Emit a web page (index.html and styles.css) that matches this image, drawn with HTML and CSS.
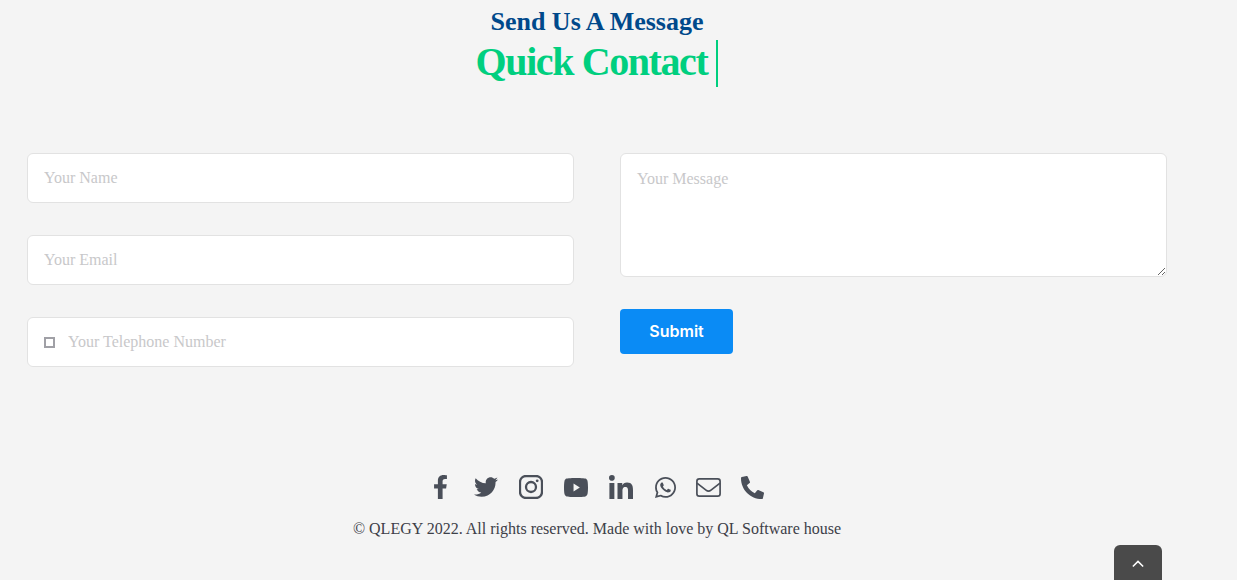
FILE: index.html
```html
<!DOCTYPE html>
<html lang="en">
<head>
  <meta charset="UTF-8">
  <meta name="viewport" content="width=device-width, initial-scale=1.0">
  <title>Quick Contact</title>
  <link rel="stylesheet" href="styles.css">
</head>
<body>
  <div class="page">
    <div class="heading">
      <h3>Send Us A Message</h3>
      <h2><span class="typed">Quick Contact</span></h2>
    </div>

    <form class="contact-form">
      <div class="col">
        <div class="field"><input type="text" placeholder="Your Name"></div>
        <div class="field"><input type="email" placeholder="Your Email"></div>
        <div class="field"><span class="flag-box"></span><input type="tel" placeholder="Your Telephone Number"></div>
      </div>
      <div class="col">
        <textarea placeholder="Your Message"></textarea>
        <button type="button" class="submit">Submit</button>
      </div>
    </form>

    <div class="footer">
      <div class="social">
        <a href="#" aria-label="Facebook"><svg class="i-fb" viewBox="0 0 320 512"><path d="M279.14 288l14.22-92.66h-88.91v-60.13c0-25.35 12.42-50.06 52.24-50.06h40.42V6.26S260.43 0 225.36 0c-73.22 0-121.08 44.38-121.08 124.72v70.62H22.89V288h81.39v224h100.17V288z"/></svg></a>
        <a href="#" aria-label="Twitter"><svg class="i-tw" viewBox="0 0 512 512"><path d="M459.37 151.716c.325 4.548.325 9.097.325 13.645 0 138.72-105.583 298.558-298.558 298.558-59.452 0-114.68-17.219-161.137-47.106 8.447.974 16.568 1.299 25.34 1.299 49.055 0 94.213-16.568 130.274-44.832-46.132-.975-84.792-31.188-98.112-72.772 6.498.974 12.995 1.624 19.818 1.624 9.421 0 18.843-1.3 27.614-3.573-48.081-9.747-84.143-51.98-84.143-102.985v-1.299c13.969 7.797 30.214 12.67 47.431 13.319-28.264-18.843-46.781-51.005-46.781-87.391 0-19.492 5.197-37.36 14.294-52.954 51.655 63.675 129.3 105.258 216.365 109.807-1.624-7.797-2.599-15.918-2.599-24.04 0-57.828 46.782-104.934 104.934-104.934 30.213 0 57.502 12.67 76.67 33.137 23.715-4.548 46.456-13.32 66.599-25.34-7.798 24.366-24.366 44.833-46.132 57.827 21.117-2.273 41.584-8.122 60.426-16.243-14.292 20.791-32.161 39.308-52.628 54.253z"/></svg></a>
        <a href="#" aria-label="Instagram"><svg class="i-ig" viewBox="0 0 24 24"><rect x="1" y="1" width="22" height="22" rx="6" class="line"/><circle cx="12" cy="12" r="5" class="line"/><circle cx="18.2" cy="5.8" r="1.4"/></svg></a>
        <a href="#" aria-label="YouTube"><svg class="i-yt" viewBox="15 64 546 384" preserveAspectRatio="none"><path d="M549.655 124.083c-6.281-23.65-24.787-42.276-48.284-48.597C458.781 64 288 64 288 64S117.22 64 74.629 75.486c-23.497 6.322-42.003 24.947-48.284 48.597-11.412 42.867-11.412 132.305-11.412 132.305s0 89.438 11.412 132.305c6.281 23.65 24.787 41.5 48.284 47.821C117.22 448 288 448 288 448s170.78 0 213.371-11.486c23.497-6.321 42.003-24.171 48.284-47.821 11.412-42.867 11.412-132.305 11.412-132.305s0-89.438-11.412-132.305zm-317.51 213.508V175.185l142.739 81.205-142.739 81.201z"/></svg></a>
        <a href="#" aria-label="LinkedIn"><svg class="i-in" viewBox="0 0 448 448"><path d="M100.28 448H7.4V148.9h92.88zM53.79 108.1C24.09 108.1 0 83.5 0 53.8a53.79 53.79 0 0 1 107.58 0c0 29.7-24.1 54.3-53.79 54.3zM447.9 448h-92.68V302.4c0-34.7-.7-79.2-48.29-79.2-48.29 0-55.69 37.7-55.69 76.7V448h-92.78V148.9h89.08v40.8h1.3c12.4-23.5 42.69-48.3 87.88-48.3 94 0 111.28 61.9 111.28 142.3V448z"/></svg></a>
        <a href="#" aria-label="WhatsApp"><svg class="i-wa" viewBox="0 32 448 448"><path d="M380.9 97.1C339 55.1 283.2 32 223.9 32c-122.4 0-222 99.6-222 222 0 39.1 10.2 77.3 29.6 111L0 480l117.7-30.9c32.4 17.7 68.9 27 106.1 27h.1c122.3 0 224.1-99.6 224.1-222 0-59.3-25.2-115-67.1-157zm-157 341.6c-33.2 0-65.7-8.9-94-25.7l-6.7-4-69.8 18.3L72 359.2l-4.4-7c-18.5-29.4-28.2-63.3-28.2-98.2 0-101.7 82.8-184.5 184.6-184.5 49.3 0 95.6 19.2 130.4 54.1 34.8 34.9 56.2 81.2 56.1 130.5 0 101.8-84.9 184.6-186.6 184.6zm101.2-138.2c-5.5-2.8-32.8-16.2-37.9-18-5.1-1.9-8.8-2.8-12.5 2.8-3.7 5.6-14.3 18-17.6 21.8-3.2 3.7-6.5 4.2-12 1.4-32.6-16.3-54-29.1-75.5-66-5.7-9.8 5.7-9.1 16.3-30.3 1.8-3.7.9-6.9-.5-9.7-1.4-2.8-12.5-30.1-17.1-41.2-4.5-10.8-9.1-9.3-12.5-9.5-3.2-.2-6.9-.2-10.6-.2-3.7 0-9.7 1.4-14.8 6.9-5.1 5.6-19.4 19-19.4 46.3 0 27.3 19.9 53.7 22.6 57.4 2.8 3.7 39.1 59.7 94.8 83.8 35.2 15.2 49 16.5 66.6 13.9 10.7-1.6 32.8-13.4 37.4-26.4 4.6-13 4.6-24.1 3.2-26.4-1.3-2.5-5-3.9-10.5-6.6z"/></svg></a>
        <a href="#" aria-label="Email"><svg class="i-mail" viewBox="0 0 25 19"><rect x="0.9" y="0.9" width="23.2" height="17.2" rx="2.4" class="line thin"/><path d="M1 5.2l9 7c1.5 1.2 3.5 1.2 5 0l9-7" class="line thin"/></svg></a>
        <a href="#" aria-label="Phone"><svg class="i-ph" viewBox="0 0 512 512"><path d="M497.39 361.8l-112-48a24 24 0 0 0-28 6.9l-49.6 60.6A370.66 370.66 0 0 1 130.6 204.11l60.6-49.6a23.94 23.94 0 0 0 6.9-28l-48-112A24.16 24.16 0 0 0 122.6.61l-104 24A24 24 0 0 0 0 48c0 256.5 207.9 464 464 464a24 24 0 0 0 23.4-18.6l24-104a24.29 24.29 0 0 0-14.01-27.6z"/></svg></a>
      </div>
      <p class="copyright">© QLEGY 2022. All rights reserved. Made with love by QL Software house</p>
    </div>
  </div>

  <a href="#" class="to-top" aria-label="Back to top"><svg viewBox="0 0 14 8"><path d="M1 7l6-6 6 6"/></svg></a>
</body>
</html>
```

FILE: styles.css
```css
html, body {
  height: 100%;
}

body {
  margin: 0;
  background-color: #f4f4f4;
  font-family: 'Liberation Serif', 'Times New Roman', serif;
  overflow: hidden;
}

.page {
  width: 1194px;
}

.heading {
  text-align: center;
  padding-top: 7px;
}

.heading h3 {
  margin: 0;
  color: #00498b;
  font-size: 26px;
  line-height: 30px;
  font-weight: bold;
}

.heading h2 {
  margin: 0;
  height: 50px;
  padding-top: 3px;
  box-sizing: border-box;
  color: #00cf7f;
  font-size: 40px;
  line-height: 44px;
  font-weight: bold;
  letter-spacing: -1.4px;
}

.typed {
  display: inline-block;
  padding: 0 9px 3px 0;
  border-right: 2px solid #00cf7f;
}

.contact-form {
  display: flex;
  gap: 46px;
  margin-top: 66px;
  padding-left: 27px;
}

.col {
  width: 547px;
  display: flex;
  flex-direction: column;
  align-items: flex-start;
  gap: 32px;
}

.field {
  width: 100%;
  height: 50px;
  box-sizing: border-box;
  display: flex;
  align-items: center;
  padding: 0 16px;
  background: white;
  border: 1px solid #e2e2e2;
  border-radius: 6px;
}

.field input {
  flex: 1;
  min-width: 0;
  border: none;
  outline: none;
  padding: 0;
  background: transparent;
  font-family: inherit;
  font-size: 16px;
}

.flag-box {
  width: 7px;
  height: 7px;
  border: 2px solid #a0a0a6;
  margin-right: 13px;
  flex-shrink: 0;
}

textarea {
  width: 100%;
  height: 124px;
  box-sizing: border-box;
  padding: 16px;
  background: white;
  border: 1px solid #e2e2e2;
  border-radius: 6px;
  outline: none;
  font-family: inherit;
  font-size: 16px;
}

input::placeholder, textarea::placeholder {
  color: #c8c8ca;
  opacity: 1;
}

.submit {
  width: 113px;
  height: 45px;
  padding: 0 0 2px;
  border: none;
  border-radius: 4px;
  background-color: #0a8bf5;
  color: white;
  font-family: Inter, sans-serif;
  font-size: 16px;
  font-weight: 600;
  cursor: pointer;
}

.footer {
  margin-top: 108px;
  text-align: center;
}

.social {
  display: flex;
  justify-content: center;
  align-items: center;
  height: 24px;
  padding-right: 2px;
}

.social a {
  width: 45px;
  display: flex;
  justify-content: center;
}

.social a:nth-child(n+6) {
  width: 43.5px;
}

.social svg {
  display: block;
  fill: #4a4f59;
}

.social .line {
  fill: none;
  stroke: #4a4f59;
  stroke-width: 2.3;
}

.social .line.thin {
  stroke-width: 1.7;
}

.i-fb { width: 15px; height: 24px; }
.i-tw { width: 24px; height: 24px; }
.i-ig { width: 24px; height: 24px; }
.i-yt { width: 24px; height: 19px; }
.i-in { width: 24px; height: 24px; }
.i-wa { width: 21px; height: 21px; }
.i-mail { width: 25px; height: 19px; }
.i-ph { width: 23px; height: 23px; }

.copyright {
  margin: 20px 0 0;
  color: #3d4048;
  font-size: 16px;
  line-height: 20px;
}

.to-top {
  position: fixed;
  left: 1114px;
  bottom: 0;
  width: 48px;
  height: 35px;
  background-color: #4a4a4a;
  border-radius: 6px 6px 0 0;
  display: flex;
  justify-content: center;
  padding-top: 15px;
  box-sizing: border-box;
}

.to-top svg {
  width: 12px;
  height: 8px;
  fill: none;
  stroke: white;
  stroke-width: 1.8;
}
```
